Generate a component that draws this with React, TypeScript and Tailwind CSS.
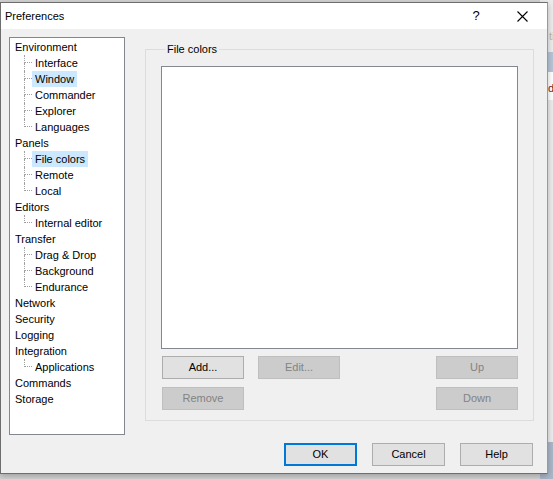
import React from "react"

type Node = { label: string; selected?: boolean; children?: { label: string; selected?: boolean }[] }

const tree: Node[] = [
  {
    label: "Environment",
    children: [
      { label: "Interface" },
      { label: "Window", selected: true },
      { label: "Commander" },
      { label: "Explorer" },
      { label: "Languages" },
    ],
  },
  { label: "Panels", children: [{ label: "File colors", selected: true }, { label: "Remote" }, { label: "Local" }] },
  { label: "Editors", children: [{ label: "Internal editor" }] },
  { label: "Transfer", children: [{ label: "Drag & Drop" }, { label: "Background" }, { label: "Endurance" }] },
  { label: "Network" },
  { label: "Security" },
  { label: "Logging" },
  { label: "Integration", children: [{ label: "Applications" }] },
  { label: "Commands" },
  { label: "Storage" },
]

function Label({ text, selected }: { text: string; selected?: boolean }) {
  return (
    <span className={`h-4 leading-4 px-[3px] whitespace-nowrap ${selected ? "bg-[#cce8ff]" : ""}`}>{text}</span>
  )
}

function TreeView() {
  return (
    <div className="w-[116px] h-[398px] shrink-0 bg-white border border-[#828790] pt-px pl-[2px] flex flex-col">
      {tree.map((node) => (
        <div key={node.label} className="flex flex-col">
          <div className="h-4 flex items-center">
            <Label text={node.label} />
          </div>
          {node.children?.map((child, i) => {
            const last = i === node.children!.length - 1
            return (
              <div key={child.label} className="h-4 flex items-center">
                {/* dotted connector */}
                <div className="w-[20px] h-4 flex flex-col shrink-0">
                  <div className="h-[8px] ml-[12px] w-[8px] border-l border-b border-dotted border-[#a0a0a0]" />
                  <div className={`h-[8px] ml-[12px] ${last ? "" : "border-l border-dotted border-[#a0a0a0]"}`} />
                </div>
                <Label text={child.label} selected={child.selected} />
              </div>
            )
          })}
        </div>
      ))}
    </div>
  )
}

function Btn({
  children,
  disabled,
  primary,
  className = "",
}: {
  children: React.ReactNode
  disabled?: boolean
  primary?: boolean
  className?: string
}) {
  const tone = disabled
    ? "bg-[#cccccc] border border-[#bfbfbf] text-[#838383]"
    : primary
      ? "bg-[#e1e1e1] border-2 border-[#0078d7] text-black"
      : "bg-[#e1e1e1] border border-[#adadad] text-black"
  return (
    <button className={`h-[23px] flex items-center justify-center text-[11px] leading-none ${tone} ${className}`}>
      {children}
    </button>
  )
}

export default function App() {
  return (
    <div className="relative w-[553px] h-[479px] overflow-hidden bg-[#d2d2d2] text-[11px] text-black font-['Liberation_Sans','Noto_Sans',sans-serif]">
      {/* application behind the dialog */}
      <div className="absolute left-[540px] top-0 w-[13px] h-[479px] bg-[#ececec] flex flex-col overflow-hidden">
        <div className="h-[52px] pt-[28px] pl-[9px] text-[#b8b8b8] whitespace-nowrap">ti</div>
        <div className="h-[20px] bg-[#b7c5d7]" />
        <div className="h-[28px] bg-white pl-[8px] pt-[8px] text-[#7a1a2a] whitespace-nowrap">d</div>
        <div className="flex-1" />
        <div className="h-[37px] bg-[#a9b7c8]" />
      </div>

      {/* dialog window */}
      <div className="absolute left-0 top-[2px] w-[548px] h-[472px] bg-[#f0f0f0] border border-[#6e6e6e] border-r-[#9a9a9a] shadow-[0_2px_6px_rgba(0,0,0,0.25)] flex flex-col">
        <div className="h-[26px] bg-white flex items-center pl-[4px] shrink-0">
          <span className="flex-1 text-[11px]">Preferences</span>
          <span className="w-[46px] text-center text-[13px]">?</span>
          <span className="w-[46px] flex items-center justify-center mr-[2px]">
            <svg width="11" height="11" viewBox="0 0 11 11">
              <path d="M0.5 0.5 L10.5 10.5 M10.5 0.5 L0.5 10.5" stroke="#000" strokeWidth="1.1" />
            </svg>
          </span>
        </div>

        <div className="flex flex-col pl-[8px] pt-[8px] pr-[12px]">
          <div className="flex">
            <TreeView />
            <fieldset className="ml-[20px] mt-[5px] w-[389px] h-[379px] shrink-0 border border-[#dcdcdc] pl-[15px] pr-[15px] pt-[10px]">
              <legend className="ml-[4px] px-[2px] leading-[14px]">File colors</legend>
              <div className="w-[357px] h-[283px] bg-white border border-[#828790]" />
              <div className="w-[357px] mt-[7px] flex gap-[14px] pl-px">
                <Btn className="w-[82px]">Add...</Btn>
                <Btn className="w-[82px]" disabled>
                  Edit...
                </Btn>
                <Btn className="w-[82px] ml-auto" disabled>
                  Up
                </Btn>
              </div>
              <div className="w-[357px] mt-[8px] flex pl-px">
                <Btn className="w-[82px]" disabled>
                  Remove
                </Btn>
                <Btn className="w-[82px] ml-auto" disabled>
                  Down
                </Btn>
              </div>
            </fieldset>
          </div>

          <div className="mt-[8px] mr-[2px] flex justify-end gap-[15px]">
            <Btn className="w-[73px]" primary>
              OK
            </Btn>
            <Btn className="w-[73px]">Cancel</Btn>
            <Btn className="w-[73px]">Help</Btn>
          </div>
        </div>
      </div>
    </div>
  )
}
